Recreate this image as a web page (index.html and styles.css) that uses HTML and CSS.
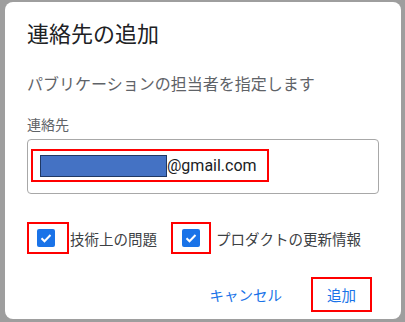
FILE: index.html
```html
<!DOCTYPE html>
<html lang="ja">
<head>
    <meta charset="UTF-8">
    <title>連絡先の追加</title>
    <link rel="stylesheet" href="styles.css">
</head>
<body>
    <div class="dialog">
        <h1 class="dialog-title">連絡先の追加</h1>
        <p class="dialog-text">パブリケーションの担当者を指定します</p>

        <label class="field-label" for="contact">連絡先</label>
        <div class="field" id="contact">
            <span class="mark mark-email">
                <span class="redact"></span>@gmail.com
            </span>
        </div>

        <div class="options">
            <label class="option">
                <span class="mark mark-check">
                    <span class="checkbox">
                        <svg viewBox="0 0 18 18" width="18" height="18"><path d="M4.5 9.2l3 3 6-6.2" fill="none" stroke="#fff" stroke-width="2"/></svg>
                    </span>
                </span>
                <span class="option-text">技術上の問題</span>
            </label>
            <label class="option option-second">
                <span class="mark mark-check">
                    <span class="checkbox">
                        <svg viewBox="0 0 18 18" width="18" height="18"><path d="M4.5 9.2l3 3 6-6.2" fill="none" stroke="#fff" stroke-width="2"/></svg>
                    </span>
                </span>
                <span class="option-text">プロダクトの更新情報</span>
            </label>
        </div>

        <div class="actions">
            <button class="btn" type="button">キャンセル</button>
            <span class="mark mark-btn">
                <button class="btn" type="submit">追加</button>
            </span>
        </div>
    </div>
</body>
</html>
```

FILE: styles.css
```css
/* Page */
body {
    margin: 0;
    padding: 2px 4px 3px 5px;
    background: #9e9e9e;
    font-family: Roboto, "Noto Sans CJK JP", sans-serif;
    height: 322px;
    box-sizing: border-box;
}

/* Dialog */
.dialog {
    background: #fff;
    border-radius: 8px;
    height: 317px;
    box-sizing: border-box;
    padding: 19px 22px 0 22px;
}

.dialog-title {
    margin: 0;
    font-size: 22px;
    line-height: 28px;
    font-weight: 400;
    color: #202124;
}

.dialog-text {
    margin: 25px 0 0;
    font-size: 16px;
    line-height: 22px;
    color: #5f6368;
}

.field-label {
    display: block;
    margin-top: 19px;
    font-size: 14px;
    line-height: 20px;
    color: #5f6368;
}

/* Text field */
.field {
    margin-top: 4px;
    height: 55px;
    box-sizing: border-box;
    border: 1px solid #a8a8a8;
    border-radius: 4px;
    padding: 9px 0 0 3px;
}

/* Red annotation boxes */
.mark {
    border: 2px solid #f00;
    box-sizing: border-box;
    display: inline-flex;
    align-items: center;
}

.mark-email {
    height: 33px;
    width: 238px;
    padding-left: 7px;
    font-size: 16px;
    color: #202124;
}

.redact {
    flex: none;
    width: 127px;
    height: 22px;
    box-sizing: border-box;
    background: #4472c4;
    border: 1px solid #1f3864;
}

/* Checkboxes */
.options {
    display: flex;
    margin-top: 28px;
}

.option {
    display: flex;
    align-items: center;
    font-size: 14.5px;
    color: #3c4043;
}

.option-second {
    margin-left: 14px;
}

.mark-check {
    height: 32px;
    padding: 0 12px 0 8px;
}

.option-second .mark-check {
    padding: 0 9px 0 9px;
}

.option-text {
    margin-left: 1px;
}

.option-second .option-text {
    margin-left: 5px;
}

.checkbox {
    width: 18px;
    height: 18px;
    border-radius: 2px;
    background: #1a73e8;
    display: flex;
}

/* Buttons */
.actions {
    display: flex;
    justify-content: flex-end;
    align-items: center;
    margin-top: 23px;
    padding-right: 7px;
}

.btn {
    background: none;
    border: none;
    font-family: inherit;
    font-size: 14.5px;
    color: #1a73e8;
    padding: 0;
    cursor: pointer;
}

.mark-btn {
    width: 61px;
    height: 35px;
    justify-content: center;
    margin-left: 29px;
}
```
